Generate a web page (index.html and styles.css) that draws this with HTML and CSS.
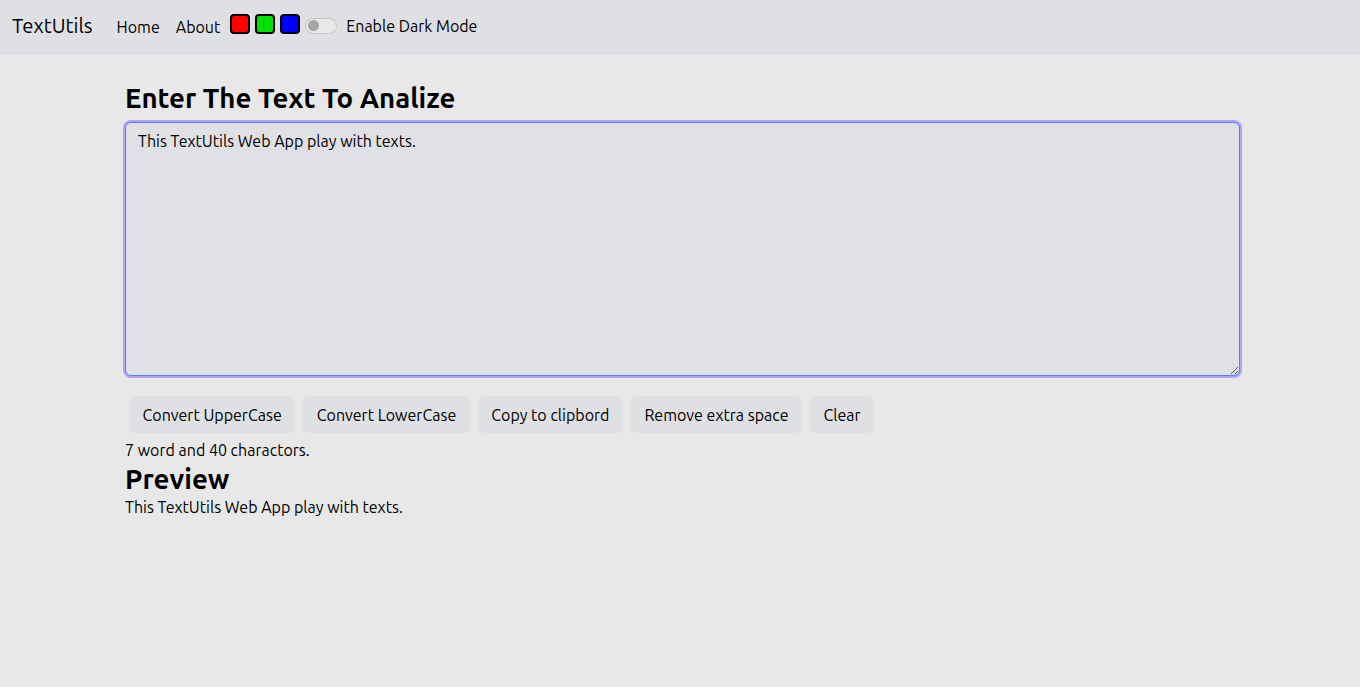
FILE: index.html
```html
<!DOCTYPE html>
<html lang="en">
<head>
<meta charset="utf-8">
<title>TextUtils</title>
<link rel="stylesheet" href="styles.css">
</head>
<body>
<nav class="navbar">
  <a class="brand" href="#">TextUtils</a>
  <ul class="nav-links">
    <li><a href="#">Home</a></li>
    <li><a href="#">About</a></li>
  </ul>
  <div class="swatches">
    <span class="swatch red"></span>
    <span class="swatch green"></span>
    <span class="swatch blue"></span>
  </div>
  <label class="switch">
    <span class="switch-track"><span class="switch-knob"></span></span>
    <span class="switch-label">Enable Dark Mode</span>
  </label>
</nav>

<main class="container">
  <h1 class="title">Enter The Text To Analize</h1>
  <textarea class="text-input" rows="10">This TextUtils Web App play with texts.</textarea>
  <div class="actions">
    <button class="btn">Convert UpperCase</button>
    <button class="btn">Convert LowerCase</button>
    <button class="btn">Copy to clipbord</button>
    <button class="btn">Remove extra space</button>
    <button class="btn">Clear</button>
  </div>
  <p class="summary">7 word and 40 charactors.</p>
  <h2 class="preview-title">Preview</h2>
  <p class="preview-text">This TextUtils Web App play with texts.</p>
</main>
</body>
</html>
```

FILE: styles.css
```css
* { box-sizing: border-box; }

html, body {
  margin: 0;
  padding: 0;
}

body {
  background: #e8e8e8;
  color: #000;
  font-family: "Ubuntu", "Noto Sans", "Open Sans", sans-serif;
  font-size: 16px;
  line-height: 1.5;
  min-height: 687px;
}

.navbar {
  display: flex;
  align-items: center;
  height: 55px;
  padding: 0 12px;
  background: #dfe0e4;
}

.brand {
  font-size: 20.3px;
  color: #000;
  text-decoration: none;
  margin-right: 16px;
  margin-top: -2px;
}

.nav-links {
  display: flex;
  list-style: none;
  margin: -2px 0 0 0;
  padding: 0;
}

.nav-links a {
  display: block;
  padding: 8px 8px;
  color: #000;
  text-decoration: none;
  font-size: 16px;
}

.swatches {
  display: flex;
  gap: 5px;
  margin-left: 2px;
  margin-top: -7px;
}

.swatch {
  width: 20px;
  height: 20px;
  border: 2px solid #000;
  border-radius: 4px;
  display: block;
}

.swatch.red { background: #ff0000; }
.swatch.green { background: #00e000; }
.swatch.blue { background: #0000ff; }

.switch {
  display: flex;
  align-items: center;
  margin-left: 5px;
  margin-top: -4px;
}

.switch-track {
  width: 32px;
  height: 16px;
  border: 1px solid rgba(0,0,0,.15);
  border-radius: 8px;
  background: #e9e9ec;
  display: flex;
  align-items: center;
  padding-left: 2px;
}

.switch-knob {
  width: 11px;
  height: 11px;
  border-radius: 50%;
  background: #a4a4a4;
}

.switch-label {
  margin-left: 9px;
  font-size: 16px;
}

.container {
  width: 1116px;
  margin: 0 auto 0 125px;
  padding-top: 26px;
}

.title {
  font-size: 27.6px;
  font-weight: 600;
  line-height: 1.2;
  margin: 0 0 8px 0;
}

.text-input {
  display: block;
  width: 1115px;
  height: 254px;
  margin: 0;
  padding: 6px 12px;
  font-family: inherit;
  font-size: 16px;
  line-height: 1.5;
  color: #000;
  background: #e0e1e5;
  border: 1px solid #5b7cff;
  border-radius: 6px;
  box-shadow: 0 0 0 2px #b3a0ff;
  outline: none;
  resize: vertical;
}

.actions {
  display: flex;
  flex-wrap: wrap;
  gap: 8px;
  margin: 20px 0 0 4px;
}

.btn {
  font-family: inherit;
  font-size: 16px;
  line-height: 1.5;
  padding: 6px 13.5px;
  height: 37px;
  border: none;
  border-radius: 6px;
  background: #dfe0e4;
  color: #000;
}

.summary {
  margin: 5px 0 0 0;
  font-size: 16px;
}

.preview-title {
  font-size: 27.6px;
  font-weight: 600;
  line-height: 1.2;
  margin: 0;
}

.preview-text {
  margin: 0;
  font-size: 16px;
}
```
